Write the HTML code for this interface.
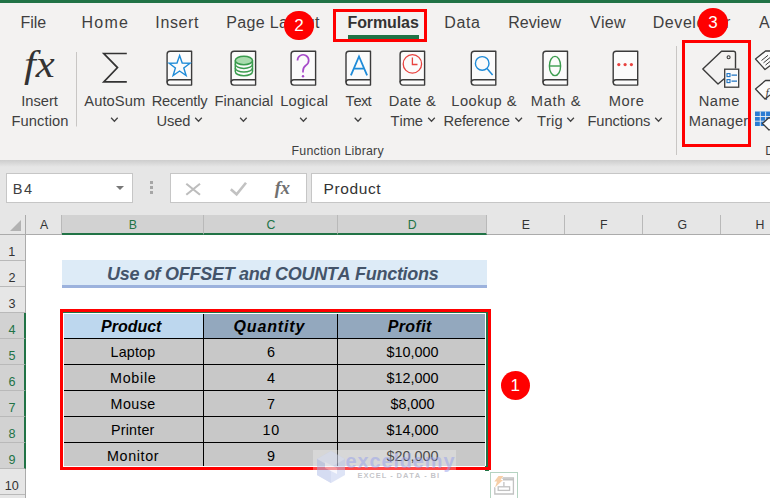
<!DOCTYPE html>
<html><head><meta charset="utf-8">
<style>
html,body{margin:0;padding:0;}
body{width:770px;height:498px;overflow:hidden;position:relative;background:#fff;font-family:"Liberation Sans",sans-serif;}
.abs{position:absolute;}
.t{position:absolute;line-height:20px;white-space:nowrap;font-kerning:none;}
.ch{top:215px;height:19px;border-right:1px solid #b9b9b9;box-sizing:border-box;}
.ch.sel{background:#d2d2d2;height:20px;border-bottom:2px solid #217346;}
.rh{left:0;width:25px;height:26px;border-bottom:1px solid #b9b9b9;box-sizing:border-box;}
.rh.sel{background:#d2d2d2;width:26px;border-right:2px solid #217346;}
.circ{width:29.6px;height:29.6px;border-radius:50%;background:#f00;}
</style></head><body>
<div class="abs" style="left:0;top:0;width:770px;height:3px;background:#217346"></div>
<div class="abs" style="left:0;top:3px;width:770px;height:157px;background:#f3f2f1"></div>
<div class="abs" style="left:0;top:160px;width:770px;height:55px;background:#e6e6e6"></div>
<div class="abs" style="left:0;top:160px;width:770px;height:7px;background:linear-gradient(#cdcdcd,#e6e6e6)"></div>
<div class="abs" style="left:348px;top:35px;width:71px;height:4px;background:#217346"></div>
<div class="abs" style="left:6px;top:173px;width:127px;height:29.5px;background:#fff;border:1px solid #c6c6c6;box-sizing:border-box"></div>
<div class="abs" style="left:116px;top:186px;width:0;height:0;border-left:4px solid transparent;border-right:4px solid transparent;border-top:4px solid #777"></div>
<div class="abs" style="left:150px;top:181px;width:3px;height:3px;background:#a6a6a6;box-shadow:0 5px 0 #a6a6a6,0 10px 0 #a6a6a6"></div>
<div class="abs" style="left:170px;top:173px;width:136.5px;height:29.5px;background:#fff;border:1px solid #c6c6c6;box-sizing:border-box"></div>
<div class="abs" style="left:310.5px;top:173px;width:470px;height:29.5px;background:#fff;border:1px solid #c6c6c6;box-sizing:border-box"></div>
<svg class="abs" style="left:170px;top:173px" width="137" height="30" viewBox="170 173 137 30">
<path d="M186.3,183.8L200,194.8M200,183.8L186.3,194.8" stroke="#bdbdbd" stroke-width="2.1" fill="none"/>
<path d="M230.8,189.3L236.6,194.3L246,182.8" stroke="#c2c2c2" stroke-width="2.6" fill="none"/>
</svg>
<div class="abs" style="left:0;top:215px;width:770px;height:20px;background:#e6e6e6;border-bottom:1px solid #ababab;box-sizing:border-box"></div>
<div class="abs" style="left:0;top:235px;width:26px;height:263px;background:#e6e6e6;border-right:1px solid #ababab;box-sizing:border-box"></div>
<div class="abs" style="left:10px;top:219.5px;width:0;height:0;border-left:11.5px solid transparent;border-bottom:11.5px solid #b2b2b2"></div>
<div class="abs" style="left:25px;top:215px;width:1px;height:20px;background:#ababab"></div>
<div class="abs ch" style="left:26px;width:36px"></div>
<div class="abs ch sel" style="left:62px;width:142px"></div>
<div class="abs ch sel" style="left:204px;width:134px"></div>
<div class="abs ch sel" style="left:338px;width:149px"></div>
<div class="abs ch" style="left:487px;width:78px"></div>
<div class="abs ch" style="left:565px;width:78px"></div>
<div class="abs ch" style="left:643px;width:78px"></div>
<div class="abs ch" style="left:721px;width:78px"></div>
<div class="abs rh" style="top:235.0px"></div>
<div class="abs rh" style="top:261.0px"></div>
<div class="abs rh" style="top:287.0px"></div>
<div class="abs rh sel" style="top:313.0px"></div>
<div class="abs rh sel" style="top:339.0px"></div>
<div class="abs rh sel" style="top:365.0px"></div>
<div class="abs rh sel" style="top:391.0px"></div>
<div class="abs rh sel" style="top:417.0px"></div>
<div class="abs rh sel" style="top:443.0px"></div>
<div class="abs rh" style="top:469.0px"></div>
<div class="abs" style="left:62px;top:260px;width:425px;height:25px;background:#ddebf7;border-bottom:3px solid #9cb2dd"></div>
<div class="abs" style="left:64px;top:314px;width:421px;height:152px;background:#000"></div>
<div class="abs" style="left:64px;top:314.0px;width:139.0px;height:24.0px;background:#bdd7ee"></div>
<div class="abs" style="left:204px;top:314.0px;width:133.0px;height:24.0px;background:#93a8be"></div>
<div class="abs" style="left:338px;top:314.0px;width:147.0px;height:24.0px;background:#93a8be"></div>
<div class="abs" style="left:64px;top:339.0px;width:139.0px;height:25.0px;background:#c8c8c8"></div>
<div class="abs" style="left:204px;top:339.0px;width:133.0px;height:25.0px;background:#c8c8c8"></div>
<div class="abs" style="left:338px;top:339.0px;width:147.0px;height:25.0px;background:#c8c8c8"></div>
<div class="abs" style="left:64px;top:365.0px;width:139.0px;height:25.0px;background:#c8c8c8"></div>
<div class="abs" style="left:204px;top:365.0px;width:133.0px;height:25.0px;background:#c8c8c8"></div>
<div class="abs" style="left:338px;top:365.0px;width:147.0px;height:25.0px;background:#c8c8c8"></div>
<div class="abs" style="left:64px;top:391.0px;width:139.0px;height:25.0px;background:#c8c8c8"></div>
<div class="abs" style="left:204px;top:391.0px;width:133.0px;height:25.0px;background:#c8c8c8"></div>
<div class="abs" style="left:338px;top:391.0px;width:147.0px;height:25.0px;background:#c8c8c8"></div>
<div class="abs" style="left:64px;top:417.0px;width:139.0px;height:25.0px;background:#c8c8c8"></div>
<div class="abs" style="left:204px;top:417.0px;width:133.0px;height:25.0px;background:#c8c8c8"></div>
<div class="abs" style="left:338px;top:417.0px;width:147.0px;height:25.0px;background:#c8c8c8"></div>
<div class="abs" style="left:64px;top:443.0px;width:139.0px;height:23.0px;background:#c8c8c8"></div>
<div class="abs" style="left:204px;top:443.0px;width:133.0px;height:23.0px;background:#c8c8c8"></div>
<div class="abs" style="left:338px;top:443.0px;width:147.0px;height:23.0px;background:#c8c8c8"></div>
<div class="abs" style="left:486px;top:312px;width:2px;height:155px;background:#217346"></div>
<div class="abs" style="left:63px;top:312px;width:425px;height:1px;background:#217346"></div>
<div class="abs" style="left:484.5px;top:466px;width:4.5px;height:5px;background:#217346"></div>
<svg class="abs" style="left:0;top:0" width="770" height="165" viewBox="0 0 770 165">
<g stroke="#3b3b3b" stroke-width="1.4" stroke-linejoin="round">
<path d="M191.6,51.2H170.1A3,3 0 0 0 167.1,54.2V82.3A2.8,2.8 0 0 0 169.9,85.1H191.6Z" fill="#fbfbfb"/><path d="M191.6,79.7H169.9A2.8,2.8 0 0 0 167.1,82.4" fill="none"/>
<path d="M255.6,51.2H234.1A3,3 0 0 0 231.1,54.2V82.3A2.8,2.8 0 0 0 233.9,85.1H255.6Z" fill="#fbfbfb"/><path d="M255.6,79.7H233.9A2.8,2.8 0 0 0 231.1,82.4" fill="none"/>
<path d="M315.59999999999997,51.2H294.09999999999997A3,3 0 0 0 291.09999999999997,54.2V82.3A2.8,2.8 0 0 0 293.9,85.1H315.59999999999997Z" fill="#fbfbfb"/><path d="M315.59999999999997,79.7H293.9A2.8,2.8 0 0 0 291.09999999999997,82.4" fill="none"/>
<path d="M370.5,51.2H349.0A3,3 0 0 0 346.0,54.2V82.3A2.8,2.8 0 0 0 348.8,85.1H370.5Z" fill="#fbfbfb"/><path d="M370.5,79.7H348.8A2.8,2.8 0 0 0 346.0,82.4" fill="none"/>
<path d="M424.59999999999997,51.2H403.09999999999997A3,3 0 0 0 400.09999999999997,54.2V82.3A2.8,2.8 0 0 0 402.9,85.1H424.59999999999997Z" fill="#fbfbfb"/><path d="M424.59999999999997,79.7H402.9A2.8,2.8 0 0 0 400.09999999999997,82.4" fill="none"/>
<path d="M495.8,51.2H474.3A3,3 0 0 0 471.3,54.2V82.3A2.8,2.8 0 0 0 474.1,85.1H495.8Z" fill="#fbfbfb"/><path d="M495.8,79.7H474.1A2.8,2.8 0 0 0 471.3,82.4" fill="none"/>
<path d="M567.5,51.2H546.0A3,3 0 0 0 543.0,54.2V82.3A2.8,2.8 0 0 0 545.8,85.1H567.5Z" fill="#fbfbfb"/><path d="M567.5,79.7H545.8A2.8,2.8 0 0 0 543.0,82.4" fill="none"/>
<path d="M637.7,51.2H616.2A3,3 0 0 0 613.2,54.2V82.3A2.8,2.8 0 0 0 616.0,85.1H637.7Z" fill="#fbfbfb"/><path d="M637.7,79.7H616.0A2.8,2.8 0 0 0 613.2,82.4" fill="none"/>
</g>
<polyline points="126.8,53.5 103.8,53.5 117.5,67.6 103.8,81.8 126.8,81.8" fill="none" stroke="#333" stroke-width="1.7" stroke-linejoin="miter"/>
<line x1="76.5" y1="52" x2="76.5" y2="126.5" stroke="#c8c6c4" stroke-width="1"/>
<line x1="676.5" y1="46" x2="676.5" y2="155" stroke="#c8c6c4" stroke-width="1"/>
<polygon points="179.6,55.6 182.2,63.0 190.1,63.2 183.8,68.0 186.1,75.5 179.6,71.0 173.1,75.5 175.4,68.0 169.1,63.2 177.0,63.0" fill="none" stroke="#1e8bd8" stroke-width="1.4" stroke-linejoin="miter"/>
<g stroke="#3a9c4e" stroke-width="1.5" fill="none"><path d="M235.3,60.5V71.5A8.6,4.2 0 0 0 252.5,71.5V60.5" fill="#fbfbfb"/><path d="M235.3,64.2A8.6,4.2 0 0 0 252.5,64.2"/><path d="M235.3,67.9A8.6,4.2 0 0 0 252.5,67.9"/><ellipse cx="243.9" cy="60.5" rx="8.6" ry="4.2" fill="#a9dcae"/></g>
<path d="M297.5,60.5A5.6,5.6 0 1 1 306,65.2Q303,67.2 303,71V72.5" fill="none" stroke="#a64ac9" stroke-width="1.7"/><circle cx="303" cy="76.2" r="1.2" fill="#a64ac9"/>
<path d="M350.9,75.3L359,56.5L367.1,75.3M353.8,68.6H364.2" fill="none" stroke="#1e8bd8" stroke-width="1.8"/>
<circle cx="412.4" cy="63.9" r="9.2" fill="none" stroke="#e8423f" stroke-width="1.3"/><path d="M412.4,57.5V64.5H417.5" fill="none" stroke="#e8423f" stroke-width="1.3"/>
<circle cx="482.2" cy="63.4" r="6.8" fill="none" stroke="#1e8bd8" stroke-width="1.4"/><path d="M487,68.4L492.6,75" fill="none" stroke="#1e8bd8" stroke-width="1.5"/>
<ellipse cx="555" cy="66" rx="5.6" ry="9.6" fill="none" stroke="#3a9c4e" stroke-width="1.4"/><path d="M549.4,66H560.6" stroke="#3a9c4e" stroke-width="1.4"/>
<g fill="#e8423f"><circle cx="618.8" cy="64.6" r="1.6"/><circle cx="625.1" cy="64.6" r="1.6"/><circle cx="631.4" cy="64.6" r="1.6"/></g>
<path d="M724.5,78.5L718,84L702.8,69L721.5,51.2H733.5A2,2 0 0 1 735.5,53.2V68.5" fill="none" stroke="#3b3b3b" stroke-width="1.4" stroke-linejoin="round"/><circle cx="728.6" cy="57.2" r="1.5" fill="none" stroke="#3b3b3b" stroke-width="1.1"/><rect x="724.7" y="69.2" width="14" height="18" fill="#fbfbfb" stroke="#3b3b3b" stroke-width="1.3"/><g fill="none" stroke="#1e74c4" stroke-width="1.1"><rect x="727" y="73.6" width="3" height="3"/><rect x="727" y="79.6" width="3" height="3"/><path d="M731.5,75.1H737M731.5,81.1H737"/></g>
<g fill="#fbfbfb" stroke="#3b3b3b" stroke-width="1.3" stroke-linejoin="round"><path d="M755.5,59L765.5,51H775V62L765,69.5Z"/><path d="M755.5,89L765.5,80.5H775V91L765,99Z"/></g><path d="M761.5,60.5L768,55.3M763.5,62.8L770,57.6M765.5,65.1L772,59.9" stroke="#3b3b3b" stroke-width="1" fill="none"/><rect x="755" y="111.5" width="16" height="14.5" fill="#2b7cd3"/><path d="M755,116.5H771M755,121.2H771M760.3,111.5V126M765.6,111.5V126" stroke="#f3f2f1" stroke-width="0.9" fill="none"/><rect x="755" y="111.5" width="16" height="5" fill="#2b7cd3" opacity="0.0"/><path d="M762.5,123.5L768.5,118H775V128L769,130Z" fill="#fbfbfb" stroke="#3b3b3b" stroke-width="1.3" stroke-linejoin="round"/><path d="M111.10000000000001,117.8L114.4,121.2L117.7,117.8" fill="none" stroke="#444" stroke-width="1.3"/><path d="M240.1,117.8L243.4,121.2L246.70000000000002,117.8" fill="none" stroke="#444" stroke-width="1.3"/><path d="M300.09999999999997,117.8L303.4,121.2L306.7,117.8" fill="none" stroke="#444" stroke-width="1.3"/><path d="M354.7,117.8L358,121.2L361.3,117.8" fill="none" stroke="#444" stroke-width="1.3"/><path d="M195.2,117.8L198.5,121.2L201.8,117.8" fill="none" stroke="#444" stroke-width="1.3"/><path d="M428.2,117.8L431.5,121.2L434.8,117.8" fill="none" stroke="#444" stroke-width="1.3"/><path d="M515.4000000000001,117.8L518.7,121.2L522.0,117.8" fill="none" stroke="#444" stroke-width="1.3"/><path d="M567.3000000000001,117.8L570.6,121.2L573.9,117.8" fill="none" stroke="#444" stroke-width="1.3"/><path d="M655.2,117.8L658.5,121.2L661.8,117.8" fill="none" stroke="#444" stroke-width="1.3"/>
</svg>
<div class="t" style="left:39.9px;top:215.1px;font-size:12.3px;color:#333;">A</div>
<div class="t" style="left:128.7px;top:215.1px;font-size:12.3px;color:#217346;">B</div>
<div class="t" style="left:266.5px;top:215.1px;font-size:12.3px;color:#217346;">C</div>
<div class="t" style="left:407.8px;top:215.1px;font-size:12.3px;color:#217346;">D</div>
<div class="t" style="left:521.7px;top:215.1px;font-size:12.3px;color:#333;">E</div>
<div class="t" style="left:600.0px;top:215.1px;font-size:12.3px;color:#333;">F</div>
<div class="t" style="left:677.4px;top:215.1px;font-size:12.3px;color:#333;">G</div>
<div class="t" style="left:755.6px;top:215.1px;font-size:12.3px;color:#333;">H</div>
<div class="t" style="left:8.3px;top:242.0px;font-size:12.6px;color:#333;">1</div>
<div class="t" style="left:8.5px;top:268.0px;font-size:12.6px;color:#333;">2</div>
<div class="t" style="left:8.5px;top:294.0px;font-size:12.6px;color:#333;">3</div>
<div class="t" style="left:8.5px;top:320.0px;font-size:12.6px;color:#217346;">4</div>
<div class="t" style="left:8.5px;top:346.0px;font-size:12.6px;color:#217346;">5</div>
<div class="t" style="left:8.5px;top:372.0px;font-size:12.6px;color:#217346;">6</div>
<div class="t" style="left:8.5px;top:398.0px;font-size:12.6px;color:#217346;">7</div>
<div class="t" style="left:8.5px;top:424.0px;font-size:12.6px;color:#217346;">8</div>
<div class="t" style="left:8.5px;top:450.0px;font-size:12.6px;color:#217346;">9</div>
<div class="t" style="left:4.8px;top:476.0px;font-size:12.6px;color:#333;">10</div>
<div class="t" style="left:107.0px;top:263.8px;font-size:18px;letter-spacing:-0.28px;color:#44546a;font-weight:bold;font-style:italic;">Use of OFFSET and COUNTA Functions</div>
<div class="t" style="left:101.1px;top:316.5px;font-size:16px;letter-spacing:-0.02px;color:#000;font-weight:bold;font-style:italic;">Product</div>
<div class="t" style="left:233.5px;top:316.5px;font-size:16px;letter-spacing:0.86px;color:#000;font-weight:bold;font-style:italic;">Quantity</div>
<div class="t" style="left:387.7px;top:316.5px;font-size:16px;letter-spacing:0.39px;color:#000;font-weight:bold;font-style:italic;">Profit</div>
<div class="t" style="left:110.6px;top:342.1px;font-size:14.3px;letter-spacing:0.17px;color:#000;">Laptop</div>
<div class="t" style="left:266.9px;top:342.1px;font-size:14.4px;color:#000;">6</div>
<div class="t" style="left:386.4px;top:342.1px;font-size:14.4px;color:#000;">$10,000</div>
<div class="t" style="left:110.1px;top:368.1px;font-size:14.3px;letter-spacing:0.70px;color:#000;">Mobile</div>
<div class="t" style="left:267.0px;top:368.1px;font-size:14.4px;color:#000;">4</div>
<div class="t" style="left:386.4px;top:368.1px;font-size:14.4px;color:#000;">$12,000</div>
<div class="t" style="left:110.6px;top:394.1px;font-size:14.3px;letter-spacing:0.42px;color:#000;">Mouse</div>
<div class="t" style="left:267.0px;top:394.1px;font-size:14.4px;color:#000;">7</div>
<div class="t" style="left:390.4px;top:394.1px;font-size:14.4px;color:#000;">$8,000</div>
<div class="t" style="left:111.1px;top:420.1px;font-size:14.3px;letter-spacing:0.18px;color:#000;">Printer</div>
<div class="t" style="left:262.4px;top:420.1px;font-size:14.3px;letter-spacing:0.84px;color:#000;">10</div>
<div class="t" style="left:386.4px;top:420.1px;font-size:14.4px;color:#000;">$14,000</div>
<div class="t" style="left:107.0px;top:446.1px;font-size:14.3px;letter-spacing:0.64px;color:#000;">Monitor</div>
<div class="t" style="left:267.0px;top:446.1px;font-size:14.4px;color:#000;">9</div>
<div class="t" style="left:386.4px;top:446.1px;font-size:14.4px;color:#000;">$20,000</div>
<div class="t" style="left:20.5px;top:12.7px;font-size:16px;letter-spacing:-0.02px;color:#3f3f3f;">File</div>
<div class="t" style="left:81.4px;top:12.7px;font-size:16px;letter-spacing:1.31px;color:#3f3f3f;">Home</div>
<div class="t" style="left:155.3px;top:12.7px;font-size:16px;letter-spacing:0.64px;color:#3f3f3f;">Insert</div>
<div class="t" style="left:226.3px;top:12.7px;font-size:16px;letter-spacing:0.32px;color:#3f3f3f;">Page Layout</div>
<div class="t" style="left:347.5px;top:12.7px;font-size:16px;letter-spacing:-0.10px;color:#333;font-weight:bold;">Formulas</div>
<div class="t" style="left:444.2px;top:12.7px;font-size:16px;letter-spacing:0.67px;color:#3f3f3f;">Data</div>
<div class="t" style="left:508.2px;top:12.7px;font-size:16px;letter-spacing:0.06px;color:#3f3f3f;">Review</div>
<div class="t" style="left:589.9px;top:12.7px;font-size:16px;letter-spacing:0.32px;color:#3f3f3f;">View</div>
<div class="t" style="left:652.7px;top:12.7px;font-size:16px;letter-spacing:0.58px;color:#3f3f3f;">Developer</div>
<div class="t" style="left:758.9px;top:12.7px;font-size:16px;color:#3f3f3f;">A</div>
<div class="t" style="left:21.3px;top:90.8px;font-size:14.7px;letter-spacing:-0.04px;color:#3f3f3f;">Insert</div>
<div class="t" style="left:11.5px;top:110.8px;font-size:14.7px;letter-spacing:0.10px;color:#3f3f3f;">Function</div>
<div class="t" style="left:84.3px;top:90.8px;font-size:14.7px;letter-spacing:0.09px;color:#3f3f3f;">AutoSum</div>
<div class="t" style="left:151.7px;top:90.8px;font-size:14.7px;letter-spacing:-0.17px;color:#3f3f3f;">Recently</div>
<div class="t" style="left:156.6px;top:110.8px;font-size:14.7px;letter-spacing:-0.18px;color:#3f3f3f;">Used</div>
<div class="t" style="left:214.5px;top:90.8px;font-size:14.7px;color:#3f3f3f;">Financial</div>
<div class="t" style="left:280.2px;top:90.8px;font-size:14.7px;letter-spacing:0.22px;color:#3f3f3f;">Logical</div>
<div class="t" style="left:345.4px;top:90.8px;font-size:14.7px;letter-spacing:-0.82px;color:#3f3f3f;">Text</div>
<div class="t" style="left:388.8px;top:90.8px;font-size:14.7px;letter-spacing:0.44px;color:#3f3f3f;">Date &amp;</div>
<div class="t" style="left:390.6px;top:110.8px;font-size:14.7px;letter-spacing:-0.09px;color:#3f3f3f;">Time</div>
<div class="t" style="left:451.3px;top:90.8px;font-size:14.7px;letter-spacing:0.46px;color:#3f3f3f;">Lookup &amp;</div>
<div class="t" style="left:443.5px;top:110.8px;font-size:14.7px;letter-spacing:-0.18px;color:#3f3f3f;">Reference</div>
<div class="t" style="left:530.8px;top:90.8px;font-size:14.7px;letter-spacing:0.63px;color:#3f3f3f;">Math &amp;</div>
<div class="t" style="left:537.0px;top:110.8px;font-size:14.7px;letter-spacing:0.09px;color:#3f3f3f;">Trig</div>
<div class="t" style="left:608.7px;top:90.8px;font-size:14.7px;letter-spacing:0.56px;color:#3f3f3f;">More</div>
<div class="t" style="left:587.5px;top:110.8px;font-size:14.7px;letter-spacing:-0.11px;color:#3f3f3f;">Functions</div>
<div class="t" style="left:698.8px;top:90.8px;font-size:14.7px;letter-spacing:0.45px;color:#3f3f3f;">Name</div>
<div class="t" style="left:688.8px;top:110.8px;font-size:14.7px;letter-spacing:0.24px;color:#3f3f3f;">Manager</div>
<div class="t" style="left:291.5px;top:141.1px;font-size:12.4px;letter-spacing:0.22px;color:#3f3f3f;">Function Library</div>
<div class="t" style="left:765.3px;top:141.1px;font-size:12.4px;color:#3f3f3f;">D</div>
<div class="t" style="left:24.0px;top:54.7px;font-size:37.4px;color:#333;font-style:italic;font-family:'Liberation Serif',serif;transform:scaleX(1.14);transform-origin:0 0;">fx</div>
<div class="t" style="left:274.7px;top:177.8px;font-size:18.5px;color:#707070;font-weight:bold;font-style:italic;font-family:'Liberation Serif',serif;">fx</div>
<div class="t" style="left:12.7px;top:178.7px;font-size:14.5px;letter-spacing:1.58px;color:#3f3f3f;">B4</div>
<div class="t" style="left:765.6px;top:82.5px;font-size:12px;color:#3b3b3b;font-style:italic;font-family:'Liberation Serif',serif;">f</div>
<div class="t" style="left:323.5px;top:178.8px;font-size:15.5px;letter-spacing:0.61px;color:#333;">Product</div>
<div class="abs" style="left:60px;top:309px;width:431px;height:161px;border:3px solid #f00;box-sizing:border-box"></div>
<div class="abs circ" style="left:284.3px;top:10.8px"></div>
<div class="abs circ" style="left:698.3px;top:8px"></div>
<div class="abs circ" style="left:500.9px;top:370.9px"></div>
<div class="abs" style="left:333px;top:9px;width:94px;height:33px;border:3px solid #f00;box-sizing:border-box"></div>
<div class="abs" style="left:682px;top:40px;width:69px;height:107px;border:3px solid #f00;box-sizing:border-box"></div>
<div class="abs" style="left:313px;top:450px;width:143px;height:32px;background:rgba(255,255,255,0.28)"></div>
<svg class="abs" style="left:313px;top:449px" width="36" height="36" viewBox="0 0 36 36"><g opacity="0.45"><path d="M18,2L32,10V26L18,34L4,26V10Z" fill="#b8c4ec"/><path d="M18,2L32,10L18,18L4,10Z" fill="#d4dcf6"/><path d="M18,18V34L4,26V10Z" fill="#a4b2e4"/><path d="M12,13L24,19V25L12,19Z" fill="#eef1fb"/></g></svg>
<div class="t" style="left:345.5px;top:449.1px;font-size:20px;line-height:24px;font-weight:bold;letter-spacing:0.85px;color:rgba(150,160,235,0.5)">exceldemy</div>
<div class="t" style="left:357.5px;top:471px;font-size:7.5px;line-height:10px;font-weight:bold;letter-spacing:0.93px;color:rgba(170,170,175,0.7)">EXCEL - DATA - BI</div>
<div class="abs" style="left:490px;top:472px;width:28px;height:30px;background:#fff;border:1px solid #b5d3c1;box-sizing:border-box"></div>
<svg class="abs" style="left:491px;top:473px" width="27" height="25" viewBox="491 473 27 25"><g fill="none" stroke="#c2c2c2" stroke-width="1.3"><path d="M494.8,487V494H513.4V478H502"/><path d="M503,479.6H513.4" stroke-width="1.8"/><rect x="498.2" y="486.8" width="11.4" height="3.6"/><path d="M503.9,482V486.8"/></g><path d="M498.5,476H503.3L500.6,480H503L495,487.5L497,481.5H494.3Z" fill="#f6cfa8" stroke="#fff" stroke-width="0.8" paint-order="stroke"/></svg>
<div class="t" style="left:294.3px;top:15.7px;font-size:17px;color:#fff;">2</div>
<div class="t" style="left:708.3px;top:12.9px;font-size:17px;color:#fff;">3</div>
<div class="t" style="left:510.5px;top:375.9px;font-size:17px;color:#fff;">1</div>
</body></html>
